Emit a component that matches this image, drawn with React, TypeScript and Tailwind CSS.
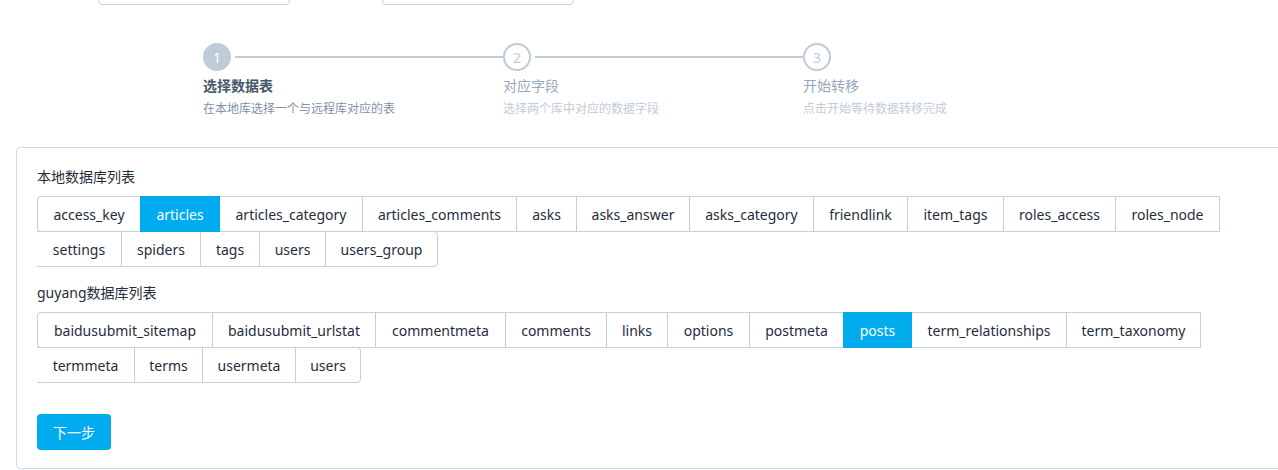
const localRows = [
  [
    { name: "access_key", w: "w-[104px]" },
    { name: "articles", w: "w-[80px]", active: true },
    { name: "articles_category", w: "w-[144px]" },
    { name: "articles_comments", w: "w-[155px]" },
    { name: "asks", w: "w-[61px]" },
    { name: "asks_answer", w: "w-[114px]" },
    { name: "asks_category", w: "w-[125px]" },
    { name: "friendlink", w: "w-[95px]" },
    { name: "item_tags", w: "w-[97px]" },
    { name: "roles_access", w: "w-[113px]" },
    { name: "roles_node", w: "w-[105px]" },
  ],
  [
    { name: "settings", w: "w-[85px]" },
    { name: "spiders", w: "w-[80px]" },
    { name: "tags", w: "w-[60px]" },
    { name: "users", w: "w-[67px]" },
    { name: "users_group", w: "w-[113px]" },
  ],
];

const remoteRows = [
  [
    { name: "baidusubmit_sitemap", w: "w-[176px]" },
    { name: "baidusubmit_urlstat", w: "w-[164px]" },
    { name: "commentmeta", w: "w-[131px]" },
    { name: "comments", w: "w-[102px]" },
    { name: "links", w: "w-[62px]" },
    { name: "options", w: "w-[83px]" },
    { name: "postmeta", w: "w-[95px]" },
    { name: "posts", w: "w-[69px]", active: true },
    { name: "term_relationships", w: "w-[156px]" },
    { name: "term_taxonomy", w: "w-[135px]" },
  ],
  [
    { name: "termmeta", w: "w-[98px]" },
    { name: "terms", w: "w-[69px]" },
    { name: "usermeta", w: "w-[94px]" },
    { name: "users", w: "w-[66px]" },
  ],
];

type Item = { name: string; w: string; active?: boolean };

function TableGroup({ rows }: { rows: Item[][] }) {
  return (
    <div className="flex flex-col">
      {rows.map((row, r) => (
        <div key={r} className={`flex ${r > 0 ? "-mt-px" : ""}`}>
          {row.map((item, i) => {
            const first = i === 0;
            const lastOfAll = r === rows.length - 1 && i === row.length - 1;
            return (
              <button
                key={item.name}
                className={[
                  "h-[36px] border text-[14px] flex items-center justify-center whitespace-nowrap",
                  item.w,
                  first ? "" : "-ml-px",
                  first && r === 0 ? "rounded-l-[4px]" : "",
                  first && r > 0 ? "border-l-0" : "",
                  lastOfAll ? "rounded-r-[4px]" : "",
                  item.active
                    ? "relative z-10 bg-[#00abee] border-[#00abee] text-white"
                    : "bg-white border-[#c4d0dc] text-[#1f2d3d]",
                ].join(" ")}
              >
                {item.name}
              </button>
            );
          })}
        </div>
      ))}
    </div>
  );
}

const steps = [
  { n: 1, title: "选择数据表", desc: "在本地库选择一个与远程库对应的表", active: true },
  { n: 2, title: "对应字段", desc: "选择两个库中对应的数据字段" },
  { n: 3, title: "开始转移", desc: "点击开始等待数据转移完成" },
];

export default function App() {
  return (
    <div
      className="w-full h-[470px] overflow-hidden bg-white"
      style={{ fontFamily: '"Noto Sans", "Noto Sans CJK SC", sans-serif' }}
    >
      {/* inputs cut off above */}
      <div className="flex gap-[92px] pl-[98px] -mt-[31px]">
        <div className="w-[192px] h-[36px] border border-[#c4d0dc] rounded-[4px]" />
        <div className="w-[192px] h-[36px] border border-[#c4d0dc] rounded-[4px]" />
      </div>

      {/* steps */}
      <div className="flex pl-[203px] mt-[38px]">
        {steps.map((s, i) => (
          <div key={s.n} className={i < steps.length - 1 ? "w-[300px]" : "w-[200px]"}>
            <div className="flex items-center">
              <div
                className={
                  s.active
                    ? "w-[28px] h-[28px] rounded-full border-2 border-[#bfcbd9] bg-[#bfcbd9] text-white text-[14px] flex items-center justify-center"
                    : "w-[28px] h-[28px] rounded-full border-2 border-[#bfcbd9] bg-white text-[#bfcbd9] text-[14px] flex items-center justify-center"
                }
              >
                {s.n}
              </div>
              {i < steps.length - 1 && (
                <div className="flex-1 h-[2px] bg-[#bfcbd9] ml-[4px]" />
              )}
            </div>
            <div
              className={
                s.active
                  ? "mt-[5px] text-[14px] leading-[20px] font-bold text-[#48576a]"
                  : "mt-[5px] text-[14px] leading-[20px] text-[#97a8be]"
              }
            >
              {s.title}
            </div>
            <div
              className={
                s.active
                  ? "mt-[5px] text-[12px] leading-[16px] text-[#8391a5]"
                  : "mt-[5px] text-[12px] leading-[16px] text-[#c2ccd8]"
              }
            >
              {s.desc}
            </div>
          </div>
        ))}
      </div>

      {/* card */}
      <div className="ml-[16px] mt-[30px] w-[1300px] border border-[#d1dbe5] rounded-[4px] pt-[19px] pb-[18px] px-[20px]">
        <div className="text-[14px] leading-[20px] text-[#1f2d3d] mb-[9px]">本地数据库列表</div>
        <TableGroup rows={localRows} />
        <div className="text-[14px] leading-[20px] text-[#1f2d3d] mt-[16px] mb-[9px]">guyang数据库列表</div>
        <TableGroup rows={remoteRows} />
        <button className="mt-[31px] w-[74px] h-[36px] rounded-[4px] bg-[#00abee] text-white text-[14px]">
          下一步
        </button>
      </div>
    </div>
  );
}
